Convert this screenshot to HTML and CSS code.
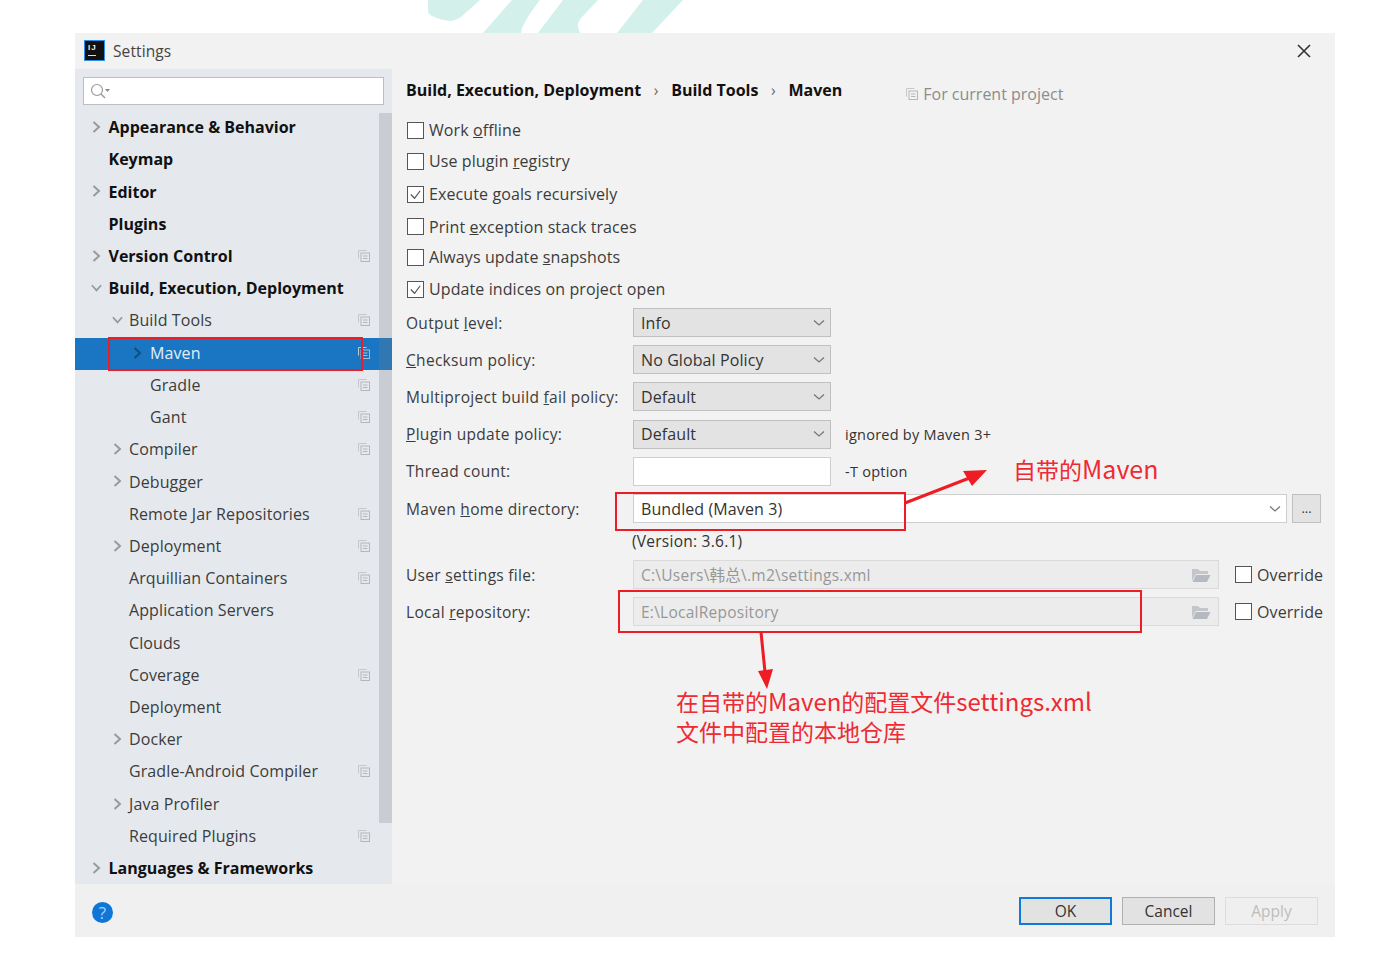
FILE: index.html
```html
<!DOCTYPE html>
<html lang="zh-CN">
<head>
  <meta charset="UTF-8">
  <title>Settings</title>
  <link rel="stylesheet" href="styles.css">
</head>
<body>
  <svg class="bg-mark" width="300" height="33" viewBox="0 0 300 33">
    <path fill="#d3f0ea" d="M18 0H70L52 16Q48 20 40 21Q30 20 22 16Q18 14 18 10ZM102 0H130Q118 15 112 28L111 33H73ZM153 0H188L172 17Q165 24 170 33H128ZM233 0H273L242 33H207Z"/>
  </svg>

  <div class="dialog">
    <header class="titlebar">
      <span class="app-icon"><span class="ij">IJ</span><span class="ij-bar"></span></span>
      <span class="title">Settings</span>
      <svg class="close" width="14" height="14" viewBox="0 0 14 14"><path d="M1 1L13 13M13 1L1 13" stroke="#333" stroke-width="1.6"/></svg>
    </header>

    <div class="body">
      <aside class="sidebar">
        <div class="search">
          <svg width="22" height="18" viewBox="0 0 22 18"><circle cx="8" cy="8" r="5.500" fill="none" stroke="#9a9a9a" stroke-width="1.200"/><path d="M12 12L16 16" stroke="#9a9a9a" stroke-width="1.400"/><path d="M16 7H21L18.500 10Z" fill="#8a8a8a"/></svg>
        </div>
        <div class="tree-wrap">
          <ul class="tree">
            <li class="row bold"><svg class="chev" viewBox="0 0 10 12"><path d="M2 1L7.500 6L2 11"/></svg>Appearance &amp; Behavior</li>
            <li class="row bold no-chev">Keymap</li>
            <li class="row bold"><svg class="chev" viewBox="0 0 10 12"><path d="M2 1L7.500 6L2 11"/></svg>Editor</li>
            <li class="row bold no-chev">Plugins</li>
            <li class="row bold"><svg class="chev" viewBox="0 0 10 12"><path d="M2 1L7.500 6L2 11"/></svg>Version Control<svg class="copy" viewBox="0 0 12 12"><use href="#copy"/></svg></li>
            <li class="row bold"><svg class="chev" viewBox="0 0 12 10"><path d="M1 2L6 7.500L11 2"/></svg>Build, Execution, Deployment</li>
            <li class="row lvl1"><svg class="chev" viewBox="0 0 12 10"><path d="M1 2L6 7.500L11 2"/></svg>Build Tools<svg class="copy" viewBox="0 0 12 12"><use href="#copy"/></svg></li>
            <li class="row lvl2 selected"><svg class="chev" viewBox="0 0 10 12"><path d="M2 1L7.500 6L2 11"/></svg>Maven<svg class="copy" viewBox="0 0 12 12"><use href="#copy"/></svg></li>
            <li class="row lvl2 no-chev">Gradle<svg class="copy" viewBox="0 0 12 12"><use href="#copy"/></svg></li>
            <li class="row lvl2 no-chev">Gant<svg class="copy" viewBox="0 0 12 12"><use href="#copy"/></svg></li>
            <li class="row lvl1"><svg class="chev" viewBox="0 0 10 12"><path d="M2 1L7.500 6L2 11"/></svg>Compiler<svg class="copy" viewBox="0 0 12 12"><use href="#copy"/></svg></li>
            <li class="row lvl1"><svg class="chev" viewBox="0 0 10 12"><path d="M2 1L7.500 6L2 11"/></svg>Debugger</li>
            <li class="row lvl1 no-chev">Remote Jar Repositories<svg class="copy" viewBox="0 0 12 12"><use href="#copy"/></svg></li>
            <li class="row lvl1"><svg class="chev" viewBox="0 0 10 12"><path d="M2 1L7.500 6L2 11"/></svg>Deployment<svg class="copy" viewBox="0 0 12 12"><use href="#copy"/></svg></li>
            <li class="row lvl1 no-chev">Arquillian Containers<svg class="copy" viewBox="0 0 12 12"><use href="#copy"/></svg></li>
            <li class="row lvl1 no-chev">Application Servers</li>
            <li class="row lvl1 no-chev">Clouds</li>
            <li class="row lvl1 no-chev">Coverage<svg class="copy" viewBox="0 0 12 12"><use href="#copy"/></svg></li>
            <li class="row lvl1 no-chev">Deployment</li>
            <li class="row lvl1"><svg class="chev" viewBox="0 0 10 12"><path d="M2 1L7.500 6L2 11"/></svg>Docker</li>
            <li class="row lvl1 no-chev">Gradle-Android Compiler<svg class="copy" viewBox="0 0 12 12"><use href="#copy"/></svg></li>
            <li class="row lvl1"><svg class="chev" viewBox="0 0 10 12"><path d="M2 1L7.500 6L2 11"/></svg>Java Profiler</li>
            <li class="row lvl1 no-chev">Required Plugins<svg class="copy" viewBox="0 0 12 12"><use href="#copy"/></svg></li>
            <li class="row bold"><svg class="chev" viewBox="0 0 10 12"><path d="M2 1L7.500 6L2 11"/></svg>Languages &amp; Frameworks</li>
          </ul>
          <div class="scrollbar"></div>
        </div>
      </aside>

      <main class="panel">
        <div class="crumbs">
          <b>Build, Execution, Deployment</b><i>›</i><b>Build Tools</b><i>›</i><b>Maven</b>
          <span class="scope"><svg class="copy" viewBox="0 0 12 12"><use href="#copy"/></svg>For current project</span>
        </div>

        <div class="checks">
          <label class="check c1"><span class="box"></span><span>Work <u>o</u>ffline</span></label>
          <label class="check c2"><span class="box"></span><span>Use plugin <u>r</u>egistry</span></label>
          <label class="check c3"><span class="box"><svg viewBox="0 0 16 16"><path d="M3 8L7 12L13 4"/></svg></span><span>Execute <u>g</u>oals recursively</span></label>
          <label class="check c4"><span class="box"></span><span>Print <u>e</u>xception stack traces</span></label>
          <label class="check c5"><span class="box"></span><span>Always update <u>s</u>napshots</span></label>
          <label class="check c6"><span class="box"><svg viewBox="0 0 16 16"><path d="M3 8L7 12L13 4"/></svg></span><span>Update indices on project open</span></label>
        </div>

        <div class="form">
          <div class="field"><span class="lbl">Output <u>l</u>evel:</span><div class="combo">Info<svg class="drop" viewBox="0 0 12 8"><path d="M1 1.500L6 6L11 1.500"/></svg></div></div>
          <div class="field"><span class="lbl"><u>C</u>hecksum policy:</span><div class="combo">No Global Policy<svg class="drop" viewBox="0 0 12 8"><path d="M1 1.500L6 6L11 1.500"/></svg></div></div>
          <div class="field"><span class="lbl">Multiproject build <u>f</u>ail policy:</span><div class="combo">Default<svg class="drop" viewBox="0 0 12 8"><path d="M1 1.500L6 6L11 1.500"/></svg></div></div>
          <div class="field"><span class="lbl"><u>P</u>lugin update policy:</span><div class="combo">Default<svg class="drop" viewBox="0 0 12 8"><path d="M1 1.500L6 6L11 1.500"/></svg></div><span class="hint">ignored by Maven 3+</span></div>
          <div class="field"><span class="lbl">Thread count:</span><div class="input short"></div><span class="hint">-T option</span></div>
          <div class="field"><span class="lbl">Maven <u>h</u>ome directory:</span><div class="input wide">Bundled (Maven 3)<svg class="drop" viewBox="0 0 12 8"><path d="M1 1.500L6 6L11 1.500"/></svg></div><div class="dots">...</div></div>
          <div class="version">(Version: 3.6.1)</div>
          <div class="field"><span class="lbl">User <u>s</u>ettings file:</span><div class="input path">C:\Users\韩总\.m2\settings.xml<svg class="folder" viewBox="0 0 20 16"><use href="#folder"/></svg></div><label class="check over"><span class="box"></span><span>Override</span></label></div>
          <div class="field"><span class="lbl">Local <u>r</u>epository:</span><div class="input path">E:\LocalRepository<svg class="folder" viewBox="0 0 20 16"><use href="#folder"/></svg></div><label class="check over"><span class="box"></span><span>Override</span></label></div>
        </div>
      </main>
    </div>

    <footer class="footer">
      <span class="help">?</span>
      <div class="buttons">
        <button class="btn primary">OK</button>
        <button class="btn">Cancel</button>
        <button class="btn disabled">Apply</button>
      </div>
    </footer>
  </div>

  <!-- red marks drawn on top of the screenshot -->
  <div class="mark mark-maven"></div>
  <div class="mark mark-bundled"></div>
  <div class="mark mark-repo"></div>
  <svg class="arrows" width="1384" height="954" viewBox="0 0 1384 954">
    <path d="M905 503L972 477" stroke="#ee1c25" stroke-width="3" fill="none"/>
    <path d="M987 470L963 471L972 486Z" fill="#ee1c25"/>
    <path d="M761 632L765 672" stroke="#ee1c25" stroke-width="3" fill="none"/>
    <path d="M758 671L773 669L767 689Z" fill="#ee1c25"/>
  </svg>
  <div class="note note-maven">自带的<span class="note-big">Maven</span></div>
  <div class="note note-repo">在自带的<span class="note-latin">Maven</span>的配置文件<span class="note-latin">settings.xml</span><br>文件中配置的本地仓库</div>

  <svg width="0" height="0" class="defs">
    <symbol id="copy" viewBox="0 0 12 12">
      <path d="M.5 8.500V.5H8.500" fill="none" stroke="#c4c8cc"/>
      <rect x="3" y="3" width="8.500" height="8.500" fill="none" stroke="#b4b8bc"/>
      <path d="M5 6H9.500M5 8.500H9.500" stroke="#b4b8bc"/>
    </symbol>
    <symbol id="folder" viewBox="0 0 20 16">
      <path d="M1 2H7L9 4H17V7H5L1 14Z" fill="#c3c7cb"/>
      <path d="M5 8H19.500L16 15H1.500Z" fill="#b5bac0"/>
    </symbol>
  </svg>
</body>
</html>
```

FILE: styles.css
```css
* {
  box-sizing: border-box;
  margin: 0;
  padding: 0;
}

body {
  width: 1384px;
  height: 954px;
  position: relative;
  overflow: hidden;
  background: #ffffff;
  font-family: "Open Sans", "Noto Sans CJK SC", sans-serif;
  font-size: 15.5px;
  color: #333;
}

.bg-mark {
  position: absolute;
  left: 410px;
  top: 0;
}

.defs {
  position: absolute;
}

.dialog {
  position: absolute;
  left: 75px;
  top: 33px;
  width: 1260px;
  height: 904px;
  background: #f2f2f2;
  display: flex;
  flex-direction: column;
}

.titlebar {
  height: 36px;
  display: flex;
  align-items: center;
  padding-left: 9px;
  padding-right: 24px;
}

.app-icon {
  width: 21px;
  height: 21px;
  background: #111;
  border: 1px solid #2f8fe8;
  display: flex;
  flex-direction: column;
  padding: 2px 0 0 3px;
  margin-right: 8px;
  margin-top: -1px;
}

.ij {
  color: #eee;
  font: bold 8px/9px "Liberation Sans", sans-serif;
  letter-spacing: 1px;
}

.ij-bar {
  width: 8px;
  height: 1px;
  margin-top: 3px;
  background: #ddd;
}

.title {
  font-size: 15.5px;
  color: #444;
  letter-spacing: 0.1px;
}

.close {
  margin-left: auto;
}

.body {
  flex: 1;
  display: flex;
  min-height: 0;
}

.sidebar {
  width: 317px;
  height: 815px;
  background: #e5e9ee;
}

.search {
  margin: 8px 8px 0;
  width: 301px;
  height: 28px;
  background: #fff;
  border: 1px solid #bcbfc2;
  display: flex;
  align-items: center;
  padding-left: 5px;
}

.tree-wrap {
  position: relative;
  margin-top: 7px;
}

.tree {
  list-style: none;
}

.row {
  height: 32.22px;
  display: flex;
  align-items: center;
  padding-left: 33.500px;
  padding-right: 21px;
  padding-bottom: 2px;
  position: relative;
  color: #3c3c3c;
  white-space: nowrap;
  font-size: 16px;
  letter-spacing: 0.1px;
}

.row.bold {
  font-weight: 700;
  color: #111;
  letter-spacing: 0;
}

.row .chev {
  position: absolute;
  left: 16px;
  top: 9px;
  width: 11px;
  height: 12px;
  fill: none;
  stroke: #9a9a9a;
  stroke-width: 2;
}

.row.lvl1 {
  padding-left: 54px;
}

.row.lvl1 .chev {
  left: 37px;
}

.row.lvl2 {
  padding-left: 75px;
}

.row.lvl2 .chev {
  left: 57px;
  stroke: #0f4f80;
}

.row.selected {
  background: #1a76c2;
  color: #e4eef8;
}

.copy {
  width: 12px;
  height: 12px;
  flex: none;
}

.row .copy {
  position: absolute;
  left: 283px;
  top: 9px;
}

.scrollbar {
  position: absolute;
  right: 0;
  top: 1px;
  width: 13px;
  height: 710px;
  background: rgba(120, 125, 130, 0.25);
}

.panel {
  flex: 1;
  padding: 0 0 0 14px;
}

.crumbs {
  display: flex;
  align-items: center;
  height: 42px;
  color: #111;
}

.crumbs b {
  font-weight: 700;
  font-size: 16px;
}

.crumbs i {
  font-style: normal;
  color: #666;
  width: 30px;
  text-align: center;
}

.scope {
  margin-left: 64px;
  margin-top: 8px;
  color: #8c8c8c;
  display: flex;
  align-items: center;
  gap: 5px;
  font-size: 16px;
}

.checks {
  display: flex;
  flex-direction: column;
}

.check {
  display: flex;
  align-items: center;
  gap: 5px;
  color: #3c3c3c;
  font-size: 16px;
  letter-spacing: 0.1px;
}

.box {
  width: 17px;
  height: 17px;
  background: #fff;
  border: 1px solid #555;
  flex: none;
  margin-left: 1px;
}

.box svg {
  display: block;
  width: 15px;
  height: 15px;
  fill: none;
  stroke: #555;
  stroke-width: 1.300;
}

/* rows are not evenly spaced in the dialog */
.c1 { height: 32px; margin-top: 3px; }
.c2 { height: 30px; }
.c3 { height: 36px; }
.c4 { height: 29px; }
.c5 { height: 32px; }
.c6 { height: 32px; }

.form {
  display: flex;
  flex-direction: column;
  margin-top: -1px;
}

.field {
  display: flex;
  align-items: center;
  height: 37.2px;
}

.lbl {
  width: 227px;
  flex: none;
  color: #3c3c3c;
  letter-spacing: 0.3px;
}

.combo,
.input {
  height: 29px;
  border: 1px solid #c0c0c0;
  display: flex;
  align-items: center;
  padding-left: 7px;
  color: #333;
  flex: none;
  font-size: 16px;
  letter-spacing: 0.1px;
}

.combo {
  width: 198px;
  background: #e3e3e3;
}

.input {
  background: #fff;
  border-color: #cfcfcf;
}

.short {
  width: 198px;
}

.wide {
  width: 654px;
}

.path {
  width: 586px;
  background: #ececec;
  border-color: #dadada;
  color: #979797;
  font-size: 15.500px;
  letter-spacing: 0.25px;
}

.drop {
  width: 12px;
  height: 8px;
  margin-left: auto;
  margin-right: 5px;
  fill: none;
  stroke: #777;
  stroke-width: 1.300;
}

.folder {
  width: 20px;
  height: 16px;
  margin-left: auto;
  margin-right: 7px;
}

.hint {
  margin-left: 14px;
  font-size: 14.500px;
  letter-spacing: 0.25px;
}

.dots {
  width: 29px;
  height: 29px;
  margin-left: 5px;
  border: 1px solid #c0c0c0;
  background: #e3e3e3;
  text-align: center;
  font-size: 13px;
  line-height: 27px;
}

.version {
  height: 29px;
  padding-left: 226px;
  line-height: 29px;
  letter-spacing: 0.25px;
}

.over {
  margin-left: 15px;
}

.footer {
  flex: none;
  height: 53px;
  display: flex;
  align-items: center;
  background: #f0f0f0;
  padding-left: 17px;
  padding-right: 17px;
}

.help {
  width: 21px;
  height: 21px;
  margin-top: 4px;
  border-radius: 50%;
  background: #0f75d6;
  color: #a9d2f5;
  text-align: center;
  line-height: 21px;
  font-size: 17px;
}

.buttons {
  margin-left: auto;
  display: flex;
  gap: 10px;
}

.btn {
  width: 93px;
  height: 28px;
  border: 1px solid #b0b0b0;
  background: #e2e2e2;
  font: inherit;
  color: #333;
}

.btn.primary {
  border: 2px solid #0f7ad8;
}

.btn.disabled {
  border-color: #dcdcdc;
  background: #efefef;
  color: #bdbdbd;
}

.mark {
  position: absolute;
  border: 2.500px solid #ee1c25;
}

.mark-maven {
  left: 108px;
  top: 337px;
  width: 255px;
  height: 34px;
}

.mark-bundled {
  left: 615px;
  top: 492px;
  width: 291px;
  height: 39px;
}

.mark-repo {
  left: 618px;
  top: 590px;
  width: 524px;
  height: 43px;
}

.arrows {
  position: absolute;
  left: 0;
  top: 0;
}

.note {
  position: absolute;
  color: #ee2a32;
  font-family: "Noto Sans CJK SC", sans-serif;
  font-size: 23px;
  white-space: nowrap;
}

.note-big {
  font-size: 25px;
}

.note-latin {
  font-size: 24px;
}

.note-maven {
  left: 1013px;
  top: 451px;
  line-height: 34px;
}

.note-repo {
  left: 676px;
  top: 686px;
  line-height: 30px;
}
```
